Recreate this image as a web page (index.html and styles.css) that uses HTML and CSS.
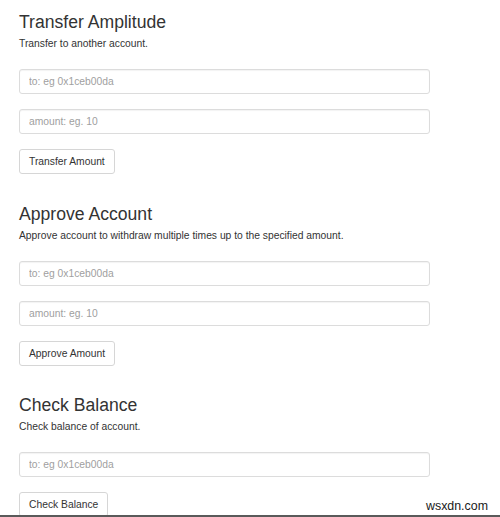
FILE: index.html
```html
<!DOCTYPE html>
<html lang="en">
<head>
<meta charset="utf-8">
<title>Token Actions</title>
<link rel="stylesheet" href="styles.css">
</head>
<body>
<main class="page">
  <section class="panel">
    <h3 class="panel-title">Transfer Amplitude</h3>
    <p class="panel-desc">Transfer to another account.</p>
    <div class="field"><input class="input" type="text" placeholder="to: eg 0x1ceb00da"></div>
    <div class="field"><input class="input" type="text" placeholder="amount: eg. 10"></div>
    <button class="btn" type="button">Transfer Amount</button>
  </section>
  <section class="panel">
    <h3 class="panel-title">Approve Account</h3>
    <p class="panel-desc">Approve account to withdraw multiple times up to the specified amount.</p>
    <div class="field"><input class="input" type="text" placeholder="to: eg 0x1ceb00da"></div>
    <div class="field"><input class="input" type="text" placeholder="amount: eg. 10"></div>
    <button class="btn" type="button">Approve Amount</button>
  </section>
  <section class="panel">
    <h3 class="panel-title">Check Balance</h3>
    <p class="panel-desc">Check balance of account.</p>
    <div class="field"><input class="input" type="text" placeholder="to: eg 0x1ceb00da"></div>
    <button class="btn btn-last" type="button">Check Balance</button>
  </section>
</main>
<div class="watermark">wsxdn.com</div>
<div class="bottom-rule"></div>
</body>
</html>
```

FILE: styles.css
```css
html, body {
  margin: 0;
  padding: 0;
  background: #fff;
}

body {
  position: relative;
  width: 500px;
  height: 517px;
  overflow: hidden;
  font-family: "Liberation Sans", Arial, sans-serif;
  color: #333;
}

.page {
  padding: 12px 0 0 19px;
  width: 411px;
}

.panel {
  display: flex;
  flex-direction: column;
  align-items: flex-start;
  margin-bottom: 29.5px;
}

.panel:last-child {
  margin-bottom: 0;
}

.panel-title {
  margin: 0;
  font-size: 17.6px;
  line-height: 20px;
  font-weight: 400;
  color: #333;
}

.panel-desc {
  margin: 4px 0 18px;
  font-size: 10.3px;
  line-height: 15px;
  color: #333;
}

.field {
  width: 100%;
  margin-bottom: 15px;
}

.input {
  display: block;
  box-sizing: border-box;
  width: 411px;
  height: 25px;
  margin: 0;
  padding: 0 9px;
  border: 1px solid #dcdcdc;
  border-radius: 3px;
  background: #fff;
  box-shadow: inset 0 1px 1px rgba(0, 0, 0, 0.05);
  font-family: "Liberation Sans", Arial, sans-serif;
  font-size: 10.3px;
  color: #555;
  outline: none;
}

.input::placeholder {
  color: #a0a0a0;
}

.btn {
  box-sizing: border-box;
  height: 25px;
  margin: 0;
  padding: 0 9px;
  border: 1px solid #d6d6d6;
  border-radius: 3px;
  background: #fff;
  font-family: "Liberation Sans", Arial, sans-serif;
  font-size: 10.3px;
  color: #333;
}

.watermark {
  position: absolute;
  left: 426px;
  top: 499px;
  font-family: "Liberation Sans", Arial, sans-serif;
  font-size: 12.4px;
  line-height: 14px;
  color: #1a1a1a;
}

.bottom-rule {
  position: absolute;
  left: 0;
  right: 0;
  bottom: 0;
  height: 2px;
  background: #5a5a5a;
}
```
